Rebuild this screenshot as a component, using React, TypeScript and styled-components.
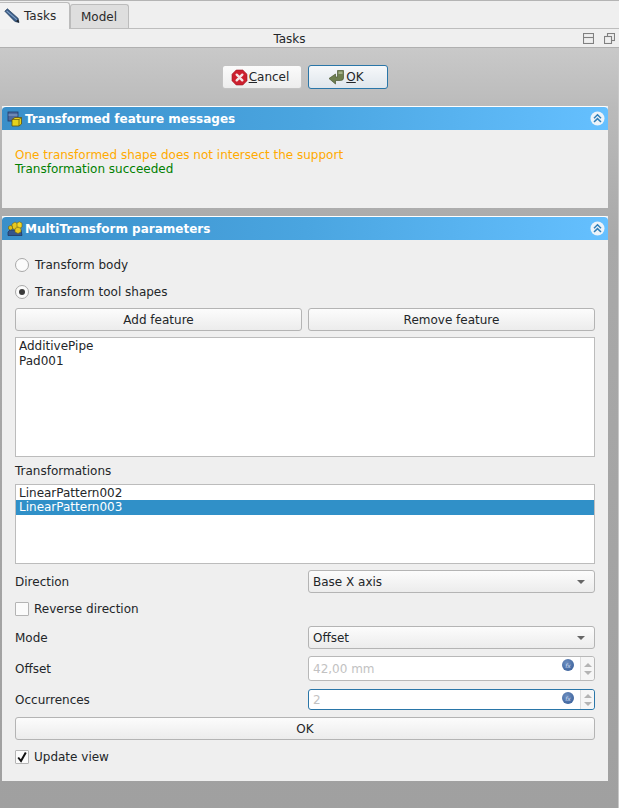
import React from 'react';
import styled, { createGlobalStyle } from 'styled-components';

const Global = createGlobalStyle`
  html, body { margin: 0; padding: 0; height: 808px; overflow: hidden; background: #efefef; }
  #root { height: 808px; }
  * { box-sizing: border-box; }
`;

const Page = styled.div`
  width: 619px; height: 808px; display: flex; flex-direction: column;
  font-family: "DejaVu Sans", sans-serif; font-size: 12px; color: #232629; background: #efefef;
`;
const TabBar = styled.div`
  height: 29px; flex: none; display: flex; align-items: flex-end; padding-top: 2px;
  border-top: 1px solid #b4b4b4; border-bottom: 1px solid #bdbdbd; background: #efefef;
`;
const Tab = styled.div<{ $active?: boolean }>`
  height: ${p => (p.$active ? '27px' : '24px')};
  margin-bottom: ${p => (p.$active ? '-1px' : '0')};
  width: ${p => (p.$active ? '70px' : '59px')};
  display: flex; align-items: center; gap: 4px;
  padding-left: ${p => (p.$active ? '4px' : '10px')};
  border: 1px solid #bcbcbc; border-bottom: none;
  border-left: ${p => (p.$active ? 'none' : '1px solid #bcbcbc')};
  border-radius: 0 3px 0 0;
  border-top-left-radius: ${p => (p.$active ? '0' : '3px')};
  background: ${p => (p.$active ? '#f2f2f2' : '#dedede')};
  color: #2a2a2a;
`;
const TitleBar = styled.div`
  height: 19px; flex: none; position: relative; display: flex; align-items: center; justify-content: center;
  background: #efefef; border-bottom: 1px solid #b0b0b0; color: #232629; padding: 1px 40px 0 0;
`;
const TitleIcons = styled.div`
  position: absolute; right: 4px; top: 4px; display: flex; gap: 10px;
`;
const Workspace = styled.div`
  flex: 1; display: flex; flex-direction: column; padding: 0 10px 0 2px;
  background: linear-gradient(180deg, #c9c9c9 0%, #bababa 8%, #a9a9a9 25%, #a0a0a0 100%);
  border-right: 1px solid #c8c8c8;
`;
const ActionRow = styled.div`
  height: 58px; flex: none; display: flex; justify-content: center; align-items: flex-start;
  gap: 6px; padding: 17px 0 0 0;
`;
const ActionButton = styled.div<{ $primary?: boolean }>`
  width: 80px; height: 24px;
  display: flex; align-items: center; justify-content: center; gap: 1px;
  padding-right: 4px;
  border: 1px solid ${p => (p.$primary ? '#2a76a8' : '#c4c4c4')}; border-radius: 3px;
  background: ${p => (p.$primary ? 'linear-gradient(#f6f8fa, #dfe6ec)' : 'linear-gradient(#fbfbfb, #ededed)')};
  color: #232629;
`;
const Under = styled.span` text-decoration: underline; `;
const Panel = styled.section`
  display: flex; flex-direction: column; background: #efefef;
`;
const PanelHeader = styled.header`
  height: 24px; flex: none; display: flex; align-items: center; gap: 2px; padding: 0 3px 0 5px;
  border-top: 1px solid #fff; border-radius: 4px 4px 0 0;
  background: linear-gradient(90deg, #3a8fc9 0%, #4aa5e0 50%, #65c0ff 100%);
  color: #fff; font-weight: bold; font-size: 12px;
`;
const PanelTitle = styled.span` flex: 1; `;
const MessagesBody = styled.div`
  height: 78px; padding: 18px 13px 0; line-height: 14px;
`;
const Message = styled.div<{ $color: string }>` color: ${p => p.$color}; `;
const Gap = styled.div` height: 8px; flex: none; `;
const ParamsBody = styled.div`
  height: 541px; padding: 11px 13px 0; display: flex; flex-direction: column;
`;
const RadioRow = styled.label`
  height: 27px; flex: none; display: flex; align-items: center; gap: 6px;
`;
const Radio = styled.span<{ $on?: boolean }>`
  width: 14px; height: 14px; border-radius: 50%; border: 1px solid #a8a8a8; background: #fbfbfb;
  display: flex; align-items: center; justify-content: center; flex: none;
  &::after { content: ''; width: 6px; height: 6px; border-radius: 50%; background: ${p => (p.$on ? '#3a3a3a' : 'transparent')}; }
`;
const TwoButtons = styled.div`
  display: grid; grid-template-columns: 1fr 1fr; gap: 6px; flex: none; margin-top: 3px;
`;
const PushButton = styled.div<{ $mt?: number }>`
  height: 23px; display: flex; align-items: center; justify-content: center;
  margin-top: ${p => p.$mt ?? 0}px; flex: none;
  border: 1px solid #b4b4b4; border-radius: 3px; background: linear-gradient(#fcfcfc, #ececec); color: #232629;
`;
const ListBox = styled.div<{ $h: number; $mt: number }>`
  height: ${p => p.$h}px; margin-top: ${p => p.$mt}px; flex: none; background: #fff;
  border: 1px solid #bcbcbc;
`;
const ListItem = styled.div<{ $sel?: boolean; $rowH: number }>`
  height: ${p => p.$rowH}px; line-height: 15px; padding-left: 3px; white-space: nowrap;
  background: ${p => (p.$sel ? '#3090c8' : 'transparent')};
  color: ${p => (p.$sel ? '#fff' : '#232629')};
  &:first-child { padding-top: 1px; }
`;
const SectionLabel = styled.div`
  height: 27px; flex: none; display: flex; align-items: flex-end; padding-bottom: 6px; line-height: 14px;
`;
const FormRow = styled.div<{ $h: number; $mt: number }>`
  height: ${p => p.$h}px; margin-top: ${p => p.$mt}px; flex: none;
  display: grid; grid-template-columns: 293px 287px; align-items: center;
`;
const Select = styled.div`
  height: 23px; display: flex; align-items: center; justify-content: space-between; padding: 0 9px 0 4px;
  border: 1px solid #b4b4b4; border-radius: 3px; background: linear-gradient(#fcfcfc, #ececec); color: #232629;
  &::after { content: ''; border-left: 4px solid transparent; border-right: 4px solid transparent; border-top: 4px solid #666; }
`;
const Spin = styled.div<{ $focus?: boolean; $h: number }>`
  height: ${p => p.$h}px; display: flex; align-items: stretch; background: #fff; border-radius: 3px;
  border: 1px solid ${p => (p.$focus ? '#2a76a8' : '#b8b8b8')};
`;
const SpinText = styled.div`
  flex: 1; display: flex; align-items: center; padding-left: 4px; color: #c2c2c2; position: relative;
`;
const Fx = styled.span`
  position: absolute; right: 6px; top: 2px; width: 12px; height: 12px; border-radius: 50%;
  display: flex; align-items: center; justify-content: center;
  background: radial-gradient(circle at 40% 35%, #6f90c0, #2f5794);
  color: #cfdcf0; font: italic 6px "DejaVu Sans", sans-serif;
`;
const SpinArrows = styled.div`
  width: 14px; flex: none; border-left: 1px solid #dcdcdc; display: flex; flex-direction: column;
  align-items: center; justify-content: center; gap: 4px; background: #f6f6f6; border-radius: 0 3px 3px 0;
`;
const ArrowUp = styled.span`
  border-left: 4px solid transparent; border-right: 4px solid transparent; border-bottom: 4px solid #b4b4b4;
`;
const ArrowDown = styled.span`
  border-left: 4px solid transparent; border-right: 4px solid transparent; border-top: 4px solid #b4b4b4;
`;
const CheckRow = styled.label<{ $mt: number }>`
  height: 14px; margin-top: ${p => p.$mt}px; flex: none; display: flex; align-items: center; gap: 5px;
`;
const Box = styled.span`
  width: 14px; height: 14px; flex: none; background: #fbfbfb; border: 1px solid #b4b4b4; border-radius: 1px;
  display: flex; align-items: center; justify-content: center;
`;
const Filler = styled.div` flex: 1; `;

const PencilIcon = () => (
  <svg width="16" height="16" viewBox="0 0 16 16">
    <path d="M0.8 3.2 L3.4 0.8 L14 10.2 L15 14.6 L10.8 13.4 Z" fill="#3a5c88" stroke="#27405f" strokeWidth="0.7" />
    <path d="M2.6 2.8 L12.8 11.6" stroke="#86a4c8" strokeWidth="1.1" />
    <path d="M12 13.2 L15 14.6 L14.3 11.6 Z" fill="#1f1f1f" />
  </svg>
);
const StackedWindows = () => (
  <svg width="11" height="11" viewBox="0 0 11 11" fill="#efefef" stroke="#808080" strokeWidth="1.1">
    <rect x="3.5" y="0.5" width="7" height="7" />
    <rect x="0.5" y="3.5" width="7" height="7" />
  </svg>
);
const TitleWindow = () => (
  <svg width="11" height="11" viewBox="0 0 11 11" fill="none" stroke="#808080" strokeWidth="1.1">
    <rect x="0.5" y="0.5" width="10" height="10" />
    <path d="M0.5 4.5 H10.5" />
  </svg>
);
const CancelIcon = () => (
  <svg width="17" height="17" viewBox="0 0 17 17">
    <path d="M5.2 1 H11.8 L16 5.2 V11.8 L11.8 16 H5.2 L1 11.8 V5.2 Z" fill="#cc1f2e" stroke="#9d1522" strokeWidth="0.6" />
    <path d="M5.7 5.7 L11.3 11.3 M11.3 5.7 L5.7 11.3" stroke="#f4e6e6" strokeWidth="2.4" strokeLinecap="round" />
  </svg>
);
const OkIcon = () => (
  <svg width="17" height="17" viewBox="0 0 17 17">
    <path d="M9.5 1.5 H15.5 V9 Q15.5 11.5 12.5 11.5 H7.5 V15 L1 9.5 L7.5 5 V8 H9.5 Z" fill="#6e7f50" stroke="#4a5733" strokeWidth="0.7" />
    <path d="M10.5 2.5 H14.5 V5 H10.5 Z" fill="#a2b088" />
  </svg>
);
const MessagesIcon = () => (
  <svg width="16" height="16" viewBox="0 0 16 16">
    <rect x="1" y="1" width="10" height="9" fill="#4d6a9e" stroke="#243a66" strokeWidth="0.8" />
    <path d="M1.5 4 H10.5" stroke="#90a8cc" strokeWidth="1" />
    <path d="M5 8.5 L8 6.5 H14.5 L14.5 13 L12 15 H5 Z" fill="#e6d21c" stroke="#5d5310" strokeWidth="0.8" />
    <path d="M5 8.5 H12 V15 M12 8.5 L14.5 6.5" fill="none" stroke="#5d5310" strokeWidth="0.7" />
  </svg>
);
const MultiIcon = () => (
  <svg width="16" height="16" viewBox="0 0 16 16">
    <path d="M1 11 L3 9 H14 L15 14.5 H1 Z" fill="#34558c" stroke="#1c2f55" strokeWidth="0.7" />
    <path d="M5 3 L8 1 L11 3 V7 L8 9 L5 7 Z" fill="#e6c91f" stroke="#6d6214" strokeWidth="0.6" />
    <path d="M10 2 L12.5 0.8 L15 2.2 V6 L12.5 7.5 L10 6 Z" fill="#efd62a" stroke="#6d6214" strokeWidth="0.6" />
    <path d="M8 7.5 L11 6 L14 7.5 V11 L11 12.5 L8 11 Z" fill="#e6c91f" stroke="#6d6214" strokeWidth="0.6" />
    <path d="M1.5 5.5 L3.5 4.5 L5.5 5.5 V8 L3.5 9 L1.5 8 Z" fill="#d9bd18" stroke="#6d6214" strokeWidth="0.6" />
  </svg>
);
const CollapseIcon = () => (
  <svg width="15" height="15" viewBox="0 0 15 15">
    <circle cx="7.5" cy="7.5" r="7" fill="#ecf3f9" />
    <path d="M4 7.2 L7.5 3.8 L11 7.2 M4 11 L7.5 7.6 L11 11" fill="none" stroke="#2f7fb8" strokeWidth="1.5" />
  </svg>
);
const CheckMark = () => (
  <svg width="12" height="12" viewBox="0 0 12 12">
    <path d="M2.2 6.5 L5 10 L9.8 1.5" fill="none" stroke="#111" strokeWidth="2" />
  </svg>
);

export default function App() {
  return (
    <Page>
      <Global />
      <TabBar>
        <Tab $active><PencilIcon />Tasks</Tab>
        <Tab>Model</Tab>
      </TabBar>
      <TitleBar>
        Tasks
        <TitleIcons><TitleWindow /><StackedWindows /></TitleIcons>
      </TitleBar>
      <Workspace>
        <ActionRow>
          <ActionButton><CancelIcon /><span><Under>C</Under>ancel</span></ActionButton>
          <ActionButton $primary><OkIcon /><span><Under>O</Under>K</span></ActionButton>
        </ActionRow>
        <Panel>
          <PanelHeader>
            <MessagesIcon />
            <PanelTitle>Transformed feature messages</PanelTitle>
            <CollapseIcon />
          </PanelHeader>
          <MessagesBody>
            <Message $color="#ffaa00">One transformed shape does not intersect the support</Message>
            <Message $color="#008000">Transformation succeeded</Message>
          </MessagesBody>
        </Panel>
        <Gap />
        <Panel>
          <PanelHeader>
            <MultiIcon />
            <PanelTitle>MultiTransform parameters</PanelTitle>
            <CollapseIcon />
          </PanelHeader>
          <ParamsBody>
            <RadioRow><Radio />Transform body</RadioRow>
            <RadioRow><Radio $on />Transform tool shapes</RadioRow>
            <TwoButtons>
              <PushButton>Add feature</PushButton>
              <PushButton>Remove feature</PushButton>
            </TwoButtons>
            <ListBox $h={120} $mt={6}>
              <ListItem $rowH={16}>AdditivePipe</ListItem>
              <ListItem $rowH={16}>Pad001</ListItem>
            </ListBox>
            <SectionLabel>Transformations</SectionLabel>
            <ListBox $h={80} $mt={0}>
              <ListItem $rowH={15}>LinearPattern002</ListItem>
              <ListItem $rowH={15} $sel>LinearPattern003</ListItem>
            </ListBox>
            <FormRow $h={23} $mt={6}>
              <span>Direction</span>
              <Select>Base X axis</Select>
            </FormRow>
            <CheckRow $mt={9}><Box />Reverse direction</CheckRow>
            <FormRow $h={23} $mt={10}>
              <span>Mode</span>
              <Select>Offset</Select>
            </FormRow>
            <FormRow $h={25} $mt={7}>
              <span>Offset</span>
              <Spin $h={25}>
                <SpinText>42,00 mm<Fx>fx</Fx></SpinText>
                <SpinArrows><ArrowUp /><ArrowDown /></SpinArrows>
              </Spin>
            </FormRow>
            <FormRow $h={21} $mt={8}>
              <span>Occurrences</span>
              <Spin $focus $h={21}>
                <SpinText>2<Fx>fx</Fx></SpinText>
                <SpinArrows><ArrowUp /><ArrowDown /></SpinArrows>
              </Spin>
            </FormRow>
            <PushButton $mt={7}>OK</PushButton>
            <CheckRow $mt={10}><Box><CheckMark /></Box>Update view</CheckRow>
            <Filler />
          </ParamsBody>
        </Panel>
      </Workspace>
    </Page>
  );
}
